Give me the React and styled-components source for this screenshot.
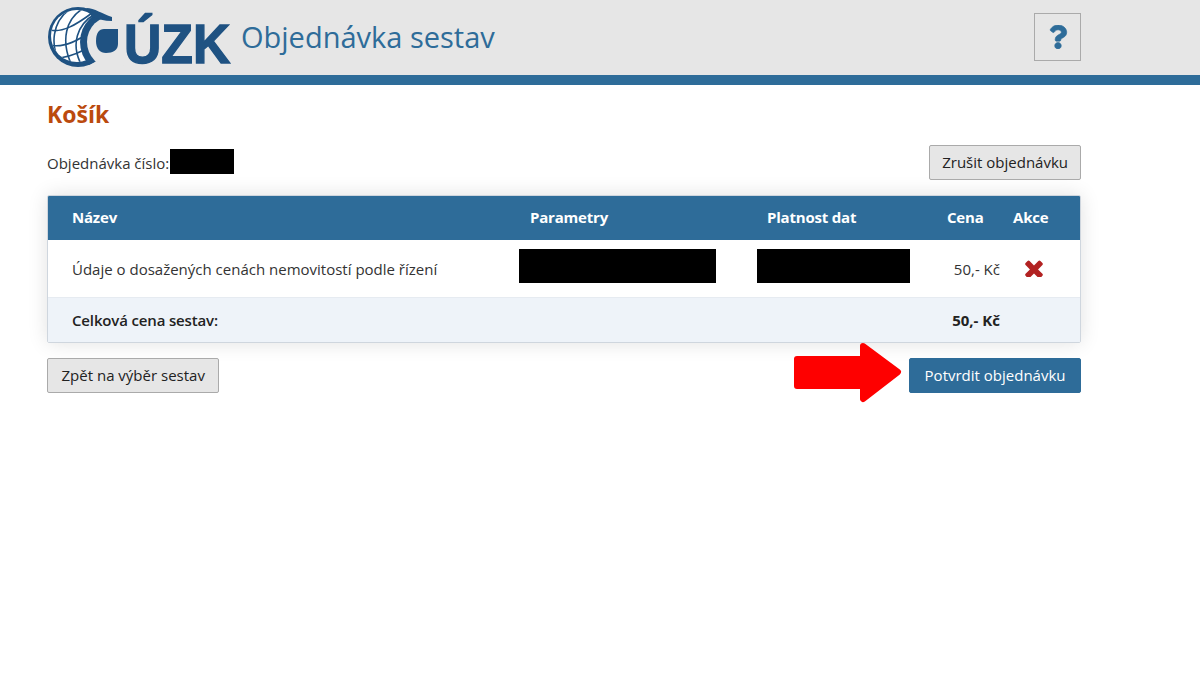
import React from "react";
import styled, { createGlobalStyle } from "styled-components";
import { FaQuestion } from "react-icons/fa";

const Global = createGlobalStyle`
  html, body { margin: 0; padding: 0; background: #fff; }
  body { font-family: "Open Sans", "Liberation Sans", sans-serif; font-size: 15px; color: #333; }
`;
const Page = styled.div`min-height: 692px; position: relative;`;
const Header = styled.header`
  height: 75px; background: #e6e6e6; border-bottom: 10px solid #2e6c99;
  padding: 0 119px 0 47px; display: flex; align-items: center; justify-content: space-between;
`;
const Brand = styled.div`display: flex; align-items: center; gap: 9px;`;
const AppTitle = styled.div`font-size: 29px; color: #2e6c99; line-height: 1.2;`;
const HelpButton = styled.button`
  width: 47px; height: 48px; padding: 0; background: transparent; border: 1px solid #aaa;
  display: flex; align-items: center; justify-content: center; color: #2e6c99; font-size: 24px;
  margin-top: -1px;
  svg { stroke: currentColor; stroke-width: 14px; }
`;
const Main = styled.main`padding: 14px 119px 0 47px;`;
const Title = styled.h1`margin: 0; font-size: 23px; line-height: 30px; font-weight: 700; color: #bb4a0e;`;
const OrderRow = styled.div`display: flex; align-items: center; justify-content: space-between; margin-top: 16px;`;
const OrderNo = styled.div`display: flex; align-items: center; gap: 1px;`;
const Redacted = styled.span`
  display: block; background: #000; width: ${p => p.$w}px; height: ${p => p.$h}px; margin-bottom: ${p => p.$mb || 0}px;
`;
const Button = styled.button`
  font: inherit; height: 35px; padding: 0 ${p => p.$px}px 1px; border-radius: 2px;
  background: ${p => p.$primary ? "#2e6c99" : "#e6e6e6"};
  color: ${p => p.$primary ? "#fff" : "#222"};
  border: 1px solid ${p => p.$primary ? "#2e6c99" : "#aaa"};
`;
const TableCard = styled.div`
  margin-top: 15px; border: 1px solid #cfd6de; border-radius: 2px; box-shadow: 0 0 20px rgba(0,0,0,.12); overflow: hidden;
`;
const Table = styled.table`width: 100%; table-layout: fixed; border-collapse: collapse;`;
const Th = styled.th`
  background: #2e6c99; color: #fff; font-weight: 700; text-align: left; height: 44px; letter-spacing: -0.2px;
  padding: 0 0 2px ${p => p.$pl}px; box-sizing: border-box;
`;
const Td = styled.td`
  height: 57px; padding: 0 ${p => p.$pr || 0}px 0 ${p => p.$pl || 0}px; text-align: ${p => p.$right ? "right" : "left"};
  border-bottom: 1px solid #e6ebf1;
`;
const FootTd = styled.td`
  height: 44px; background: #eef3f9; font-weight: ${p => p.$right ? 700 : 600}; color: #222;
  letter-spacing: ${p => p.$right ? 0 : -0.15}px;
  padding: 0 ${p => p.$pr || 0}px 0 ${p => p.$pl || 0}px; text-align: ${p => p.$right ? "right" : "left"};
`;
const RemoveIcon = styled.svg`display: block; color: #b22222; width: 18px; height: 18px; margin-top: -2px;`;
const Actions = styled.div`display: flex; justify-content: space-between; margin-top: 15px;`;
const Arrow = styled.svg`position: absolute; left: 789px; top: 340px;`;
const LogoSvg = styled.svg`display: block;`;

const BLUE = "#1f5282";
const BG = "#e6e6e6";

const Logo = () => (
  <LogoSvg width="185" height="75" viewBox="47 0 185 75" aria-label="ČÚZK logo">
    <defs>
      <clipPath id="disc"><circle cx="78" cy="37" r="30" /></clipPath>
      <clipPath id="land"><circle cx="77" cy="36" r="26" /></clipPath>
    </defs>
    <circle cx="78" cy="37" r="30" fill={BLUE} />
    <circle cx="77" cy="36" r="26" fill="#fff" />
    <g clipPath="url(#land)" fill="none" stroke={BLUE} strokeWidth="1.6">
      <path d="M84 8 C66 18 60 40 72 66" />
      <path d="M70 9 C52 22 50 45 60 63" />
      <path d="M95 14 C76 25 72 45 80 62" />
      <path d="M50 30 C62 33 76 25 92 13" />
      <path d="M50 45 C62 48 76 42 90 32" />
      <path d="M56 58 C64 58 72 56 84 50" />
    </g>
    <g clipPath="url(#disc)">
      <circle cx="113" cy="42" r="33" fill={BLUE} />
    </g>
    <circle cx="113" cy="42" r="26" fill={BG} />
    <path d="M86 8 C95 8 102 14 112 17 L112 21 C104 21 98 19 92 17Z" fill={BLUE} />
    <path d="M104 29 H118 V44 C118 50 113 53 106 53 C100 53 96 49 96 41 C96 33 99 29 104 29Z" fill={BLUE} />
    <text
      transform="translate(124 63) scale(0.94 1)" fontFamily="'Liberation Sans', sans-serif" fontWeight="700" fontSize="55"
      fill={BLUE} stroke={BLUE} strokeWidth="1.4"
    >ÚZK</text>
  </LogoSvg>
);

export default function App() {
  return (
    <Page>
      <Global />
      <Header>
        <Brand>
          <Logo />
          <AppTitle>Objednávka sestav</AppTitle>
        </Brand>
        <HelpButton aria-label="Nápověda"><FaQuestion /></HelpButton>
      </Header>
      <Main>
        <Title>Košík</Title>
        <OrderRow>
          <OrderNo>Objednávka číslo: <Redacted $w={64} $h={25} $mb={2} /></OrderNo>
          <Button $px={12}>Zrušit objednávku</Button>
        </OrderRow>
        <TableCard>
          <Table>
            <colgroup>
              <col style={{ width: 471 }} /><col style={{ width: 238 }} /><col style={{ width: 178 }} /><col style={{ width: 72 }} /><col />
            </colgroup>
            <thead>
              <tr>
                <Th $pl={24}>Název</Th>
                <Th $pl={11}>Parametry</Th>
                <Th $pl={10}>Platnost dat</Th>
                <Th $pl={12}>Cena</Th>
                <Th $pl={6}>Akce</Th>
              </tr>
            </thead>
            <tbody>
              <tr>
                <Td $pl={24}>Údaje o dosažených cenách nemovitostí podle řízení</Td>
                <Td><Redacted $w={197} $h={34} $mb={6} /></Td>
                <Td><Redacted $w={153} $h={34} $mb={6} /></Td>
                <Td $right $pr={7}>50,- Kč</Td>
                <Td $pl={18}>
                  <RemoveIcon viewBox="100 260 1208 1208" aria-label="Odebrat">
                    <path fill="currentColor" d="M1298 1322q0 40-28 68l-136 136q-28 28-68 28t-68-28l-294-294-294 294q-28 28-68 28t-68-28l-136-136q-28-28-28-68t28-68l294-294-294-294q-28-28-28-68t28-68l136-136q28-28 68-28t68 28l294 294 294-294q28-28 68-28t68 28l136 136q28 28 28 68t-28 68l-294 294 294 294q28 28 28 68z" />
                  </RemoveIcon>
                </Td>
              </tr>
            </tbody>
            <tfoot>
              <tr>
                <FootTd $pl={24}>Celková cena sestav:</FootTd>
                <FootTd /><FootTd />
                <FootTd $right $pr={7}>50,- Kč</FootTd>
                <FootTd />
              </tr>
            </tfoot>
          </Table>
        </TableCard>
        <Actions>
          <Button $px={13.5}>Zpět na výběr sestav</Button>
          <Button $primary $px={14.5}>Potvrdit objednávku</Button>
        </Actions>
      </Main>
      <Arrow width="116" height="66" viewBox="0 0 116 66" aria-hidden="true">
        <path d="M8 19 H74 V6 L109 32 L74 59 V46 H8 Z" fill="#fe0000" stroke="#fe0000" strokeWidth="6" strokeLinejoin="round" />
      </Arrow>
    </Page>
  );
}
